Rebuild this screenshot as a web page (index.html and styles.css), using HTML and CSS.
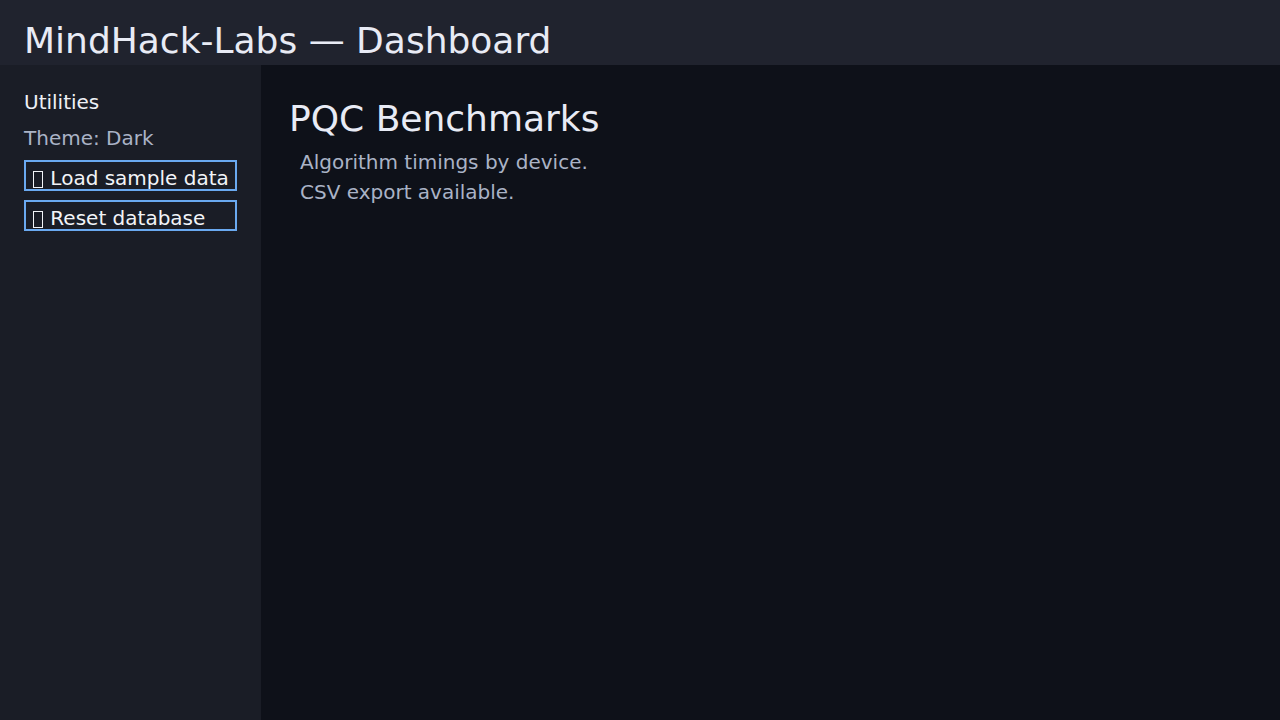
FILE: index.html
```html
<!DOCTYPE html>
<html>
<head>
<meta charset="utf-8">
<link rel="stylesheet" href="styles.css">
</head>
<body>
<header class="topbar"><h1 class="title">MindHack-Labs — Dashboard</h1></header>
<div class="layout">
  <aside class="sidebar">
    <div class="side-heading">Utilities</div>
    <div class="side-theme">Theme: Dark</div>
    <button class="btn"><span class="tofu"></span> Load sample data</button>
    <button class="btn"><span class="tofu"></span> Reset database</button>
  </aside>
  <main class="content">
    <h2 class="page-title">PQC Benchmarks</h2>
    <div class="desc">
      <p>Algorithm timings by device.</p>
      <p>CSV export available.</p>
    </div>
  </main>
</div>
</body>
</html>
```
FILE: styles.css
```css
html, body { margin: 0; height: 100%; }
body {
  font-family: "DejaVu Sans", sans-serif;
  background: #0e1119;
  color: #e6e9f2;
  display: flex;
  flex-direction: column;
}
.topbar {
  background: #20232e;
  height: 65px;
  padding: 20px 24px 0;
  box-sizing: border-box;
  flex: none;
}
.title {
  margin: 0;
  font-size: 36px;
  font-weight: normal;
  line-height: 42px;
  color: #e8ebf5;
  white-space: nowrap;
}
.layout { display: flex; flex: 1; }
.sidebar {
  width: 261px;
  flex: none;
  background: #1a1d26;
  box-sizing: border-box;
  padding: 25px 24px 24px;
  display: flex;
  flex-direction: column;
  align-items: flex-start;
}
.side-heading { font-size: 20px; line-height: 24px; color: #eef0f6; }
.side-theme { font-size: 20px; line-height: 24px; color: #aab3c6; margin-top: 12px; }
.btn {
  font-family: inherit;
  font-size: 20px;
  line-height: 23px;
  color: #f2f4f8;
  background: transparent;
  border: 2px solid #6aa9f0;
  padding: 5px 6px 0;
  height: 31px;
  width: 213px;
  box-sizing: border-box;
  text-align: left;
  white-space: nowrap;
  overflow: visible;
  margin-top: 10px;
}
.btn + .btn { margin-top: 9px; }
.tofu {
  display: inline-block;
  box-sizing: border-box;
  width: 10px;
  height: 17px;
  margin-left: 1px;
  margin-right: 1px;
  border: 1px solid #f2f4f8;
  vertical-align: -3px;
}
.content { flex: 1; padding: 33px 28px; }
.page-title {
  margin: 0;
  font-size: 36px;
  font-weight: normal;
  line-height: 42px;
  color: #e8ebf5;
}
.desc { padding-left: 11px; margin-top: 7px; }
.desc p { margin: 0; font-size: 20px; line-height: 30px; color: #aab3c6; }
```
